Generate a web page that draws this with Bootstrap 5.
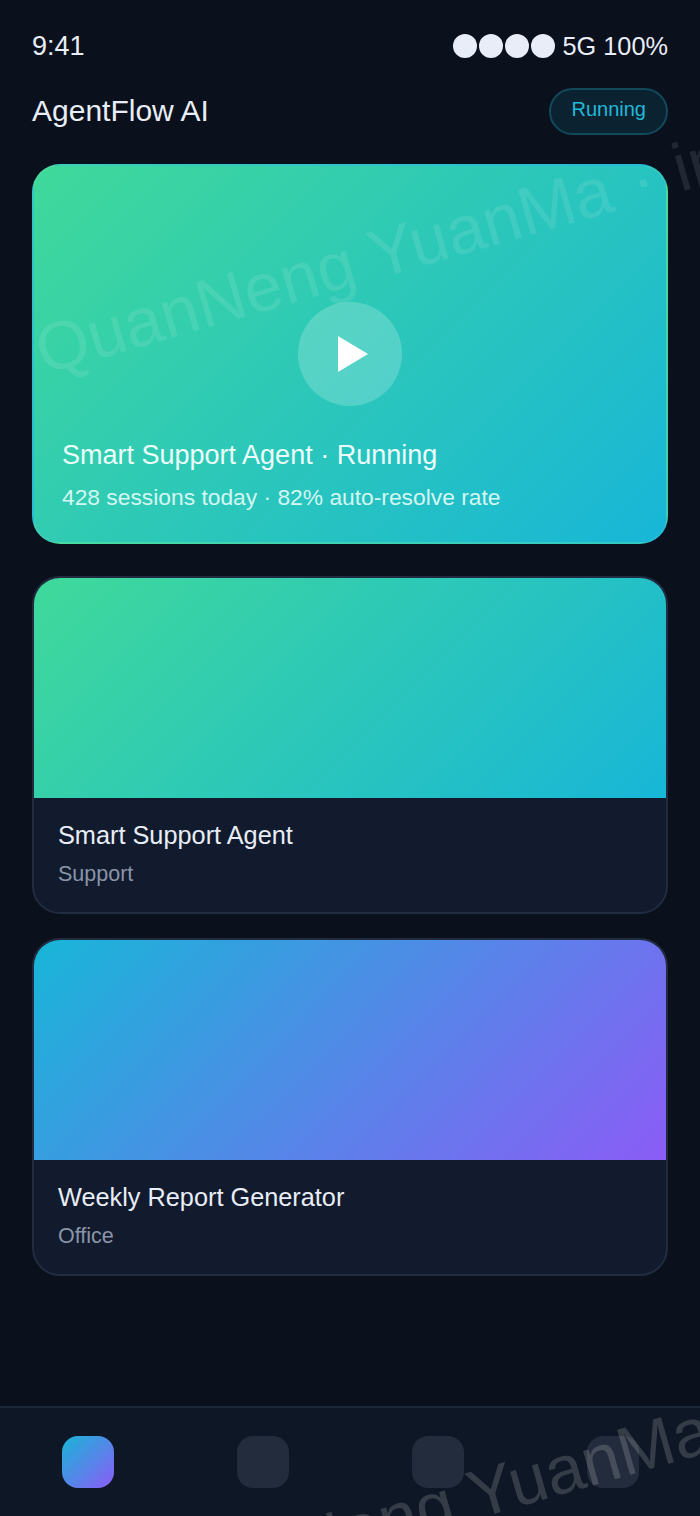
<!DOCTYPE html>
<html lang="en">
<head>
  <meta charset="UTF-8" />
  <meta name="viewport" content="width=device-width, initial-scale=1.0" />
  <title>AgentFlow AI</title>
  <link href="https://cdn.jsdelivr.net/npm/bootstrap@5.3.2/dist/css/bootstrap.min.css" rel="stylesheet">
  <style>
    body {
      background-color: #0a101c;
      color: #e8edf7;
      font-family: "Liberation Sans", sans-serif;
      height: 1516px;
      overflow: hidden;
    }
    .app-shell { height: 1516px; overflow: hidden; }
    .status-bar { padding: 29px 32px 0; height: 62px; font-size: 25.3px; line-height: 30px; }
    .status-time { font-size: 27px; }
    .signal-row { column-gap: 2px; }
    .signal-dot { width: 24px; height: 24px; border-radius: 50%; background: #e8edf7; }
    .top-bar { padding: 26px 32px 0; height: 102px; }
    .app-title { font-size: 30px; line-height: 40px; font-weight: 400; margin: 3px 0 0; }
    .run-pill {
      color: #22b8d8; font-size: 20px; line-height: 26px; padding: 6px 20px 11px;
      border: 2px solid #12495c; border-radius: 24px; background: #0b2230;
    }
    .page-main { padding: 0 32px; gap: 24px; }
    .hero-box {
      height: 380px; border-radius: 28px; margin-bottom: 8px;
      border: 2px solid rgba(255,255,255,.06);
      background: linear-gradient(135deg, #40d99a, #18b6d8);
      padding: 0 28px 30px;
    }
    .play-circle { width: 104px; height: 104px; border-radius: 50%; background: rgba(255,255,255,.2); }
    .play-tri { margin-left: 6px; }
    .hero-title { font-size: 27px; line-height: 36px; color: #ecfdf9; }
    .hero-sub { font-size: 22.8px; line-height: 30px; color: #d4f7f2; margin-top: 9px; }
    .agent-box {
      height: 338px; border: 2px solid #212c40; border-radius: 28px;
      background: #111b2d; overflow: hidden;
    }
    .thumb-box { height: 220px; }
    .thumb-green { background: linear-gradient(135deg, #40d99a, #18b6d8); }
    .thumb-violet { background: linear-gradient(135deg, #18b6d8, #8b5cf6); }
    .agent-info { padding: 20px 24px 0; }
    .agent-name { font-size: 25.3px; line-height: 34px; color: #e8edf7; }
    .agent-cat { font-size: 21.5px; line-height: 28px; color: #8a94a8; margin-top: 8px; }
    .tab-bar {
      position: absolute; left: 0; right: 0; bottom: 0; height: 110px;
      border-top: 2px solid #1e2736; background: #0e1725;
      display: grid; grid-template-columns: repeat(4, 1fr); justify-items: center; padding-top: 28px;
    }
    .tab-icon { width: 52px; height: 52px; border-radius: 16px; background: #232c3c; }
    .tab-on { background: linear-gradient(135deg, #18b6d8, #8b5cf6); }
    .water-mark {
      position: absolute; white-space: nowrap; font-size: 68px; line-height: 80px;
      color: rgba(255,255,255,.1); transform: rotate(-16deg); transform-origin: left top;
      pointer-events: none; z-index: 5;
    }
    .mark-a { left: 26px; top: 313px; }
    .mark-b { left: 125px; top: 1553px; color: rgba(255,255,255,.16); }
    .mark-dot { margin: 0 3px; }
  </style>
</head>
<body>
  <div class="app-shell position-relative">
    <div class="status-bar d-flex justify-content-between align-items-center">
      <span class="status-time">9:41</span>
      <div class="d-flex align-items-center">
        <div class="signal-row d-flex">
          <span class="signal-dot"></span><span class="signal-dot"></span><span class="signal-dot"></span><span class="signal-dot"></span>
        </div>
        <span class="ms-2">5G 100%</span>
      </div>
    </div>

    <div class="top-bar d-flex justify-content-between align-items-start">
      <h1 class="app-title">AgentFlow AI</h1>
      <span class="run-pill">Running</span>
    </div>

    <div class="page-main d-flex flex-column">
      <div class="hero-box position-relative d-flex flex-column justify-content-end">
        <div class="play-circle position-absolute top-50 start-50 translate-middle d-flex align-items-center justify-content-center">
          <svg class="play-tri" width="30" height="36" viewBox="0 0 30 36"><path d="M0 0 L30 18 L0 36 Z" fill="#fff"/></svg>
        </div>
        <div class="hero-title">Smart Support Agent · Running</div>
        <div class="hero-sub">428 sessions today · 82% auto-resolve rate</div>
      </div>

      <div class="agent-box">
        <div class="thumb-box thumb-green"></div>
        <div class="agent-info">
          <div class="agent-name">Smart Support Agent</div>
          <div class="agent-cat">Support</div>
        </div>
      </div>

      <div class="agent-box">
        <div class="thumb-box thumb-violet"></div>
        <div class="agent-info">
          <div class="agent-name">Weekly Report Generator</div>
          <div class="agent-cat">Office</div>
        </div>
      </div>
    </div>

    <div class="tab-bar">
      <span class="tab-icon tab-on"></span>
      <span class="tab-icon"></span>
      <span class="tab-icon"></span>
      <span class="tab-icon"></span>
    </div>

    <div class="water-mark mark-a">QuanNeng YuanMa <span class="mark-dot">·</span> in</div>
    <div class="water-mark mark-b">QuanNeng YuanMa</div>
  </div>
  <script src="https://cdn.jsdelivr.net/npm/bootstrap@5.3.2/dist/js/bootstrap.bundle.min.js"></script>
</body>
</html>
